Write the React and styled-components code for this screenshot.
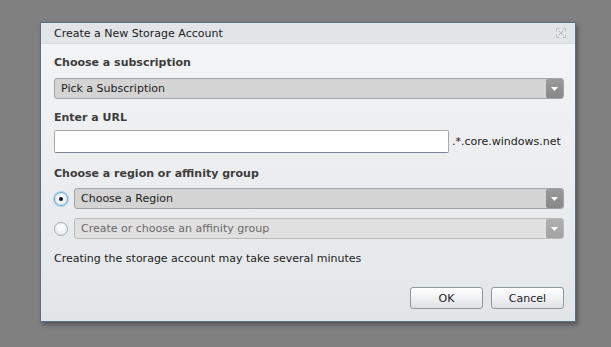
import React from 'react';
import styled, { createGlobalStyle } from 'styled-components';

const Global = createGlobalStyle`
  html, body {
    margin: 0;
    padding: 0;
    background: #808080;
    font-family: "DejaVu Sans", Verdana, sans-serif;
  }
`;

const Page = styled.div`
  width: 611px;
  height: 347px;
  padding: 22px 0 0 40px;
  box-sizing: border-box;
`;

const Dialog = styled.div`
  width: 536px;
  height: 300px;
  box-sizing: border-box;
  border: 1px solid #5d6f80;
  box-shadow: 2px 3px 4px rgba(40, 40, 40, 0.45);
  display: flex;
  flex-direction: column;
  background: linear-gradient(#f4f5f6, #e3e6e9);
`;

const TitleBar = styled.div`
  height: 20px;
  flex: none;
  display: flex;
  align-items: center;
  justify-content: space-between;
  padding: 0 9px 0 13px;
  background: #e2e5e8;
  border-bottom: 1px solid #d6dadd;
  font-size: 11px;
  color: #1b1b1b;
`;

const Body = styled.div`
  flex: 1;
  display: flex;
  flex-direction: column;
  padding: 12px 11px 0 13px;
`;

const Label = styled.div`
  font-size: 11px;
  line-height: 14px;
  font-weight: bold;
  color: #3d3d3d;
  margin-top: ${p => p.$top}px;
`;

const Select = styled.div`
  flex: 1;
  height: 21px;
  box-sizing: border-box;
  margin-top: ${p => p.$top || 0}px;
  border: 1px solid ${p => (p.$disabled ? '#b9b9b9' : '#a3a3a3')};
  border-radius: 3px;
  background: ${p => (p.$disabled ? '#e0e0e0' : '#d4d4d4')};
  display: flex;
  align-items: center;
  justify-content: space-between;
  padding-left: 6px;
  font-size: 11px;
  color: ${p => (p.$disabled ? '#6a6a6a' : '#1c1c1c')};
`;

const Arrow = styled.div`
  width: 17px;
  height: 19px;
  border-radius: 2px;
  background: ${p => (p.$disabled ? 'linear-gradient(#b0b0b0, #a2a2a2)' : 'linear-gradient(#9a9a9a, #878787)')};
  display: flex;
  align-items: center;
  justify-content: center;
`;

const UrlRow = styled.div`
  display: flex;
  align-items: center;
  margin-top: 5px;
  gap: 3px;
`;

const Input = styled.input`
  width: 395px;
  height: 23px;
  box-sizing: border-box;
  border: 1px solid #a8a8a8;
  border-bottom-color: #7e8790;
  border-radius: 2px;
  background: #fff;
  margin: 0;
  outline: none;
`;

const Suffix = styled.span`
  font-size: 11px;
  color: #222;
`;

const Option = styled.div`
  display: flex;
  align-items: center;
  gap: 6px;
  margin-top: ${p => p.$top}px;
`;

const Radio = styled.div`
  width: 14px;
  height: 14px;
  flex: none;
  box-sizing: border-box;
  border-radius: 50%;
  border: 1px solid ${p => (p.$checked ? '#6ea4cf' : '#a4adb6')};
  background: radial-gradient(circle at 50% 35%, #ffffff, #dfe3e7);
  box-shadow: ${p => (p.$checked ? '0 0 0 1px #a9d2ee' : 'none')};
  display: flex;
  align-items: center;
  justify-content: center;
  &::after {
    content: '';
    width: 4px;
    height: 4px;
    border-radius: 50%;
    background: ${p => (p.$checked ? '#111' : 'transparent')};
  }
`;

const Note = styled.div`
  font-size: 11px;
  line-height: 14px;
  color: #1c1c1c;
  margin-top: 13px;
`;

const Buttons = styled.div`
  display: flex;
  justify-content: flex-end;
  gap: 8px;
  margin-top: 21px;
`;

const Button = styled.button`
  width: 73px;
  height: 22px;
  border: 1px solid #8f979f;
  border-radius: 3px;
  background: linear-gradient(#ffffff, #f1f2f4 50%, #dde0e4);
  font-family: inherit;
  font-size: 11px;
  color: #1c1c1c;
  padding: 0;
`;

const ArrowIcon = () => (
  <svg width="7" height="4" viewBox="0 0 7 4">
    <path d="M0 0h7L3.5 4z" fill="#fff" />
  </svg>
);

const CloseIcon = () => (
  <svg width="10" height="10" viewBox="0 0 10 10" fill="none" stroke="#bcbcbc" strokeWidth="1">
    <path d="M2.5 2.5l5 5M7.5 2.5l-5 5" />
    <path d="M0.5 0.5h2.5M0.5 0.5v2.5M9.5 0.5h-2.5M9.5 0.5v2.5M0.5 9.5h2.5M0.5 9.5v-2.5M9.5 9.5h-2.5M9.5 9.5v-2.5" />
  </svg>
);

const SelectBox = ({ text, top, disabled }) => (
  <Select $top={top} $disabled={disabled}>
    <span>{text}</span>
    <Arrow $disabled={disabled}>
      <ArrowIcon />
    </Arrow>
  </Select>
);

export default function App() {
  return (
    <Page>
      <Global />
      <Dialog>
        <TitleBar>
          <span>Create a New Storage Account</span>
          <CloseIcon />
        </TitleBar>
        <Body>
          <Label $top={0}>Choose a subscription</Label>
          <Option $top={8}>
            <SelectBox text="Pick a Subscription" />
          </Option>
          <Label $top={12}>Enter a URL</Label>
          <UrlRow>
            <Input type="text" />
            <Suffix>.*.core.windows.net</Suffix>
          </UrlRow>
          <Label $top={14}>Choose a region or affinity group</Label>
          <Option $top={7}>
            <Radio $checked />
            <SelectBox text="Choose a Region" />
          </Option>
          <Option $top={9}>
            <Radio />
            <SelectBox text="Create or choose an affinity group" disabled />
          </Option>
          <Note>Creating the storage account may take several minutes</Note>
          <Buttons>
            <Button>OK</Button>
            <Button>Cancel</Button>
          </Buttons>
        </Body>
      </Dialog>
    </Page>
  );
}
